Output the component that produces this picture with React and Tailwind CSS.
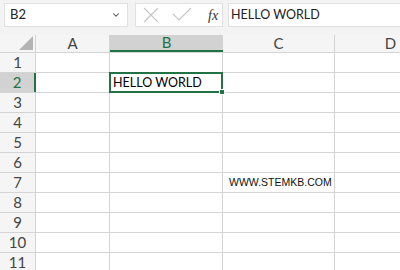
import { ChevronDown } from "lucide-react";

const cols = [
  { key: "A", w: "w-[74px]" },
  { key: "B", w: "w-[113px]" },
  { key: "C", w: "w-[112px]" },
  { key: "D", w: "w-[112px]" },
];

const rows = [1, 2, 3, 4, 5, 6, 7, 8, 9, 10, 11];

function Cell({ col, row }) {
  const selected = col.key === "B" && row === 2;
  return (
    <div
      className={`${col.w} relative h-full shrink-0 border-r border-[#d4d4d4] flex items-center`}
    >
      {selected && (
        <div className="absolute -left-px -top-px -right-px -bottom-px z-10 border-2 border-[#217346] flex items-center pl-[2px] pt-[2px]">
          <span className="text-[12.5px] text-black whitespace-nowrap">
            HELLO WORLD
          </span>
          <div className="absolute -right-[4px] -bottom-[4px] w-[6px] h-[6px] bg-[#217346] border border-white" />
        </div>
      )}
      {col.key === "C" && row === 7 && (
        <span className="pl-[6px] pt-[1px] text-[10.5px] text-[#111] font-['Liberation_Sans','Arial',sans-serif] whitespace-nowrap">
          WWW.STEMKB.COM
        </span>
      )}
    </div>
  );
}

export default function App() {
  return (
    <div className="w-[400px] h-[270px] overflow-hidden bg-white font-['Lato','Open_Sans',sans-serif] select-none">
      <div className="h-[35px] bg-[#f3f3f3] flex items-start pt-[3px] pl-[4px]">
        <div className="w-[124px] h-[24px] bg-white border border-[#e1e1e1] flex items-center justify-between pl-[5px] pr-[6px]">
          <span className="text-[13px] text-[#222]">B2</span>
          <ChevronDown className="w-[10px] h-[10px] text-[#444]" strokeWidth={2.5} />
        </div>
        <div className="ml-[7px] w-[88px] h-[24px] bg-white border border-[#e1e1e1] flex items-center pl-[7px]">
          <svg width="50" height="22" viewBox="0 0 50 22" className="shrink-0">
            <g stroke="#c6c6c6" strokeWidth="1.1" fill="none">
              <path d="M1 4 L15 18 M15 4 L1 18" />
              <path d="M30 10 L36 16 L48 4" />
            </g>
          </svg>
          <span className="ml-[15px] text-[14px] italic text-[#333] font-['Liberation_Serif',serif]">
            fx
          </span>
        </div>
        <div className="ml-[5px] flex-1 h-[24px] bg-white border border-r-0 border-[#e1e1e1] flex items-center pl-[2px]">
          <span className="text-[12.5px] text-[#222] whitespace-nowrap">HELLO WORLD</span>
        </div>
      </div>

      <div className="flex h-[18px] bg-[#f5f5f5] border-b border-[#d4d4d4]">
        <div className="w-[36px] shrink-0 h-full border-r border-[#d4d4d4] relative">
          <div className="absolute right-[2px] bottom-[2px] w-0 h-0 border-l-[14px] border-l-transparent border-b-[14px] border-b-[#b4b4b4]" />
        </div>
        {cols.map((c) => (
          <div
            key={c.key}
            className={`${c.w} shrink-0 h-full flex items-center justify-center text-[15px] ${
              c.key === "B"
                ? "bg-[#d2d2d2] text-[#217346] border-b-2 border-[#217346] -mb-px"
                : "text-[#444] border-r border-[#d4d4d4]"
            }`}
          >
            {c.key}
          </div>
        ))}
      </div>

      {rows.map((r) => (
        <div key={r} className="flex h-[20px] border-b border-[#d4d4d4]">
          <div
            className={`w-[36px] shrink-0 h-full flex items-center justify-center text-[15px] ${
              r === 2
                ? "bg-[#d2d2d2] text-[#217346] border-r-2 border-[#217346]"
                : "bg-[#f5f5f5] text-[#444] border-r border-[#d4d4d4]"
            }`}
          >
            {r}
          </div>
          {cols.map((c) => (
            <Cell key={c.key} col={c} row={r} />
          ))}
        </div>
      ))}
    </div>
  );
}
